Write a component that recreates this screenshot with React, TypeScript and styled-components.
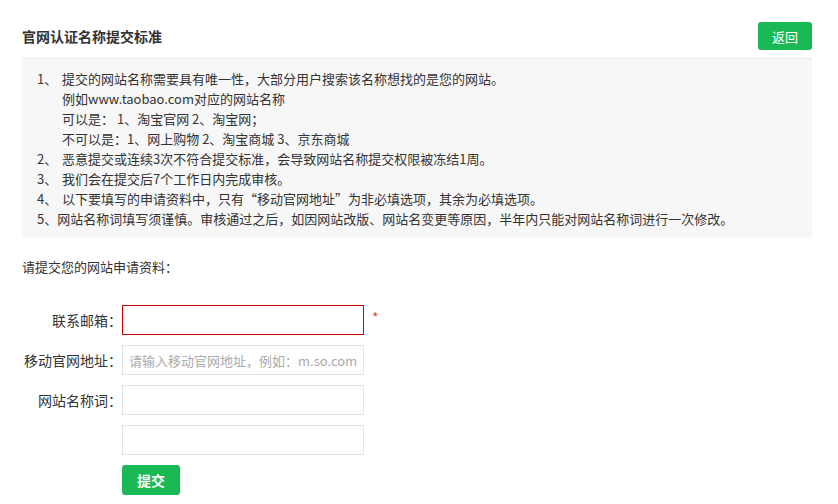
import styled, { createGlobalStyle } from "styled-components";

const GlobalStyle = createGlobalStyle`
  body {
    margin: 0;
    background: #fff;
    font-family: "Noto Sans CJK SC", "Liberation Sans", sans-serif;
    color: #333;
  }
`

const Page = styled.div`
  width: 790px;
  padding: 22px 26px 0 22px;
`

const Header = styled.div`
  display: flex;
  justify-content: space-between;
  align-items: center;
  height: 28px;
  margin-bottom: 8px;
`

const Title = styled.h2`
  margin: 0;
  font-size: 14px;
  font-weight: bold;
  color: #333;
`

const GreenButton = styled.button<{ $w: number; $h: number; $bold?: boolean }>`
  width: ${p => p.$w}px;
  height: ${p => p.$h}px;
  border: none;
  border-radius: 3px;
  background: #1bb955;
  color: #fff;
  font-family: inherit;
  font-size: ${p => (p.$bold ? 14 : 13)}px;
  font-weight: ${p => (p.$bold ? "bold" : "normal")};
  padding: 0;
  cursor: pointer;
`

const Notice = styled.div`
  background: #f7f7f7;
  border-top: 1px solid #ececec;
  padding: 10px 15px 9px 15px;
  font-size: 13px;
  line-height: 20px;
  color: #333;
`

const Item = styled.div`
  display: flex;
`

const Num = styled.span<{ $narrow?: boolean }>`
  width: ${p => (p.$narrow ? "auto" : "25px")};
  flex-shrink: 0;
`

const Lines = styled.div`
  display: flex;
  flex-direction: column;
`

const Intro = styled.p`
  margin: 19px 0 28px;
  font-size: 13px;
  line-height: 20px;
`

const Form = styled.div`
  display: flex;
  flex-direction: column;
  gap: 10px;
`

const Row = styled.div`
  display: flex;
  align-items: center;
`

const Label = styled.label`
  width: 100px;
  text-align: right;
  font-size: 14px;
  color: #333;
`

const Input = styled.input<{ $error?: boolean }>`
  box-sizing: border-box;
  width: 242px;
  height: 30px;
  border: 1px solid ${p => (p.$error ? "#cc0000" : "#e3e3e3")};
  outline: none;
  padding: 0 6px;
  font-family: inherit;
  font-size: 13px;
  color: #333;
  &::placeholder {
    color: #aaa;
  }
`

const Star = styled.span`
  color: #e24b3b;
  font-size: 14px;
  margin-left: 8px;
  margin-top: -6px;
`

export default function App() {
  return (
    <>
      <GlobalStyle />
      <Page>
        <Header>
          <Title>官网认证名称提交标准</Title>
          <GreenButton $w={54} $h={28}>返回</GreenButton>
        </Header>
        <Notice>
          <Item>
            <Num>1、</Num>
            <Lines>
              <span>提交的网站名称需要具有唯一性，大部分用户搜索该名称想找的是您的网站。</span>
              <span>例如www.taobao.com对应的网站名称</span>
              <span>可以是： 1、淘宝官网 2、淘宝网；</span>
              <span>不可以是：1、网上购物 2、淘宝商城 3、京东商城</span>
            </Lines>
          </Item>
          <Item>
            <Num>2、</Num>
            <span>恶意提交或连续3次不符合提交标准，会导致网站名称提交权限被冻结1周。</span>
          </Item>
          <Item>
            <Num>3、</Num>
            <span>我们会在提交后7个工作日内完成审核。</span>
          </Item>
          <Item>
            <Num>4、</Num>
            <span>以下要填写的申请资料中，只有“移动官网地址”为非必填选项，其余为必填选项。</span>
          </Item>
          <Item>
            <Num $narrow>5、</Num>
            <span>网站名称词填写须谨慎。审核通过之后，如因网站改版、网站名变更等原因，半年内只能对网站名称词进行一次修改。</span>
          </Item>
        </Notice>
        <Intro>请提交您的网站申请资料：</Intro>
        <Form>
          <Row>
            <Label>联系邮箱：</Label>
            <Input $error />
            <Star>*</Star>
          </Row>
          <Row>
            <Label>移动官网地址：</Label>
            <Input placeholder="请输入移动官网地址，例如：m.so.com" />
          </Row>
          <Row>
            <Label>网站名称词：</Label>
            <Input />
          </Row>
          <Row>
            <Label />
            <Input />
          </Row>
          <Row>
            <Label />
            <GreenButton $w={58} $h={30} $bold>提交</GreenButton>
          </Row>
        </Form>
      </Page>
    </>
  );
}
